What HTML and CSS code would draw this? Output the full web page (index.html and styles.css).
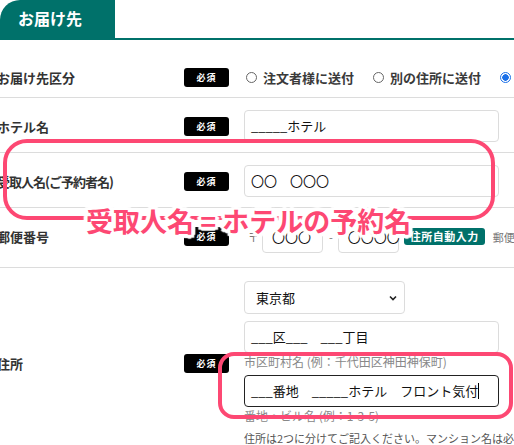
FILE: index.html
```html
<!DOCTYPE html>
<html lang="ja">
<head>
<meta charset="utf-8">
<link rel="stylesheet" href="styles.css">
</head>
<body>
<div class="page">
  <div class="tabbar">
    <div class="tab">お届け先</div>
  </div>
  <div class="rows">
    <div class="row r1">
      <div class="label">お届け先区分</div>
      <div class="badge">必須</div>
      <div class="content radios">
        <span class="opt"><span class="radio"></span>注文者様に送付</span>
        <span class="opt"><span class="radio"></span>別の住所に送付</span>
        <span class="opt"><span class="radio on"></span>お届け先を指定</span>
      </div>
    </div>
    <div class="row">
      <div class="label">ホテル名</div>
      <div class="badge">必須</div>
      <div class="content"><div class="field wide">_____ホテル</div></div>
    </div>
    <div class="row">
      <div class="label narrow">受取人名(ご予約者名)</div>
      <div class="badge">必須</div>
      <div class="content"><div class="field wide">〇〇　〇〇〇</div></div>
    </div>
    <div class="row r4">
      <div class="label">郵便番号</div>
      <div class="badge">必須</div>
      <div class="content postal">
        <span class="mark">〒</span>
        <div class="field zip">〇〇〇</div>
        <span class="dash">-</span>
        <div class="field zip">〇〇〇〇</div>
        <span class="btn">住所自動入力</span>
        <span class="hint">郵便番号から住所を自動入力</span>
      </div>
    </div>
    <div class="row r5">
      <div class="label">住所</div>
      <div class="badge">必須</div>
      <div class="content addr">
        <div class="field select">東京都
          <svg class="chev" width="8" height="6" viewBox="0 0 8 6"><path d="M1 1.5 L4 4.5 L7 1.5" fill="none" stroke="#222" stroke-width="1.6"/></svg>
        </div>
        <div class="field wide">___区___　___丁目</div>
        <div class="help">市区町村名 (例：千代田区神田神保町)</div>
        <div class="field wide focus">___番地　_____ホテル　フロント気付<span class="caret"></span></div>
        <div class="help">番地・ビル名 (例：1-3-5)</div>
        <div class="note">住所は2つに分けてご記入ください。マンション名は必ずご記入ください。</div>
      </div>
    </div>
  </div>
  <div class="hl hl1"></div>
  <div class="callout">受取人名 = ホテルの予約名</div>
  <div class="hl hl2"></div>
</div>
</body>
</html>
```
FILE: styles.css
```css
html, body {
  margin: 0;
  padding: 0;
  background: #fff;
}
body {
  width: 514px;
  height: 445px;
  overflow: hidden;
  font-family: "Noto Sans CJK JP", "Noto Sans", sans-serif;
  color: #333;
}
.page {
  position: relative;
  width: 514px;
  height: 445px;
  overflow: hidden;
}
.tabbar {
  border-bottom: 2px solid #00716a;
  height: 38px;
  display: flex;
}
.tab {
  width: 115px;
  height: 38px;
  background: #00716a;
  border-radius: 20px 0 0 0;
  color: #fff;
  font-weight: bold;
  font-size: 16px;
  line-height: 37px;
  padding-left: 18px;
  box-sizing: border-box;
}
.rows {
  margin-top: 18px;
  margin-left: -3px;
}
.row {
  display: flex;
  align-items: center;
  border-bottom: 1px solid #dcdcdc;
  padding: 12px 0 10px;
  white-space: nowrap;
}
.row.r1 {
  padding: 10px 0 10px;
}
.row.r4 {
  padding: 12px 0 14px;
}
.row.r5 {
  padding: 13px 0 10px;
  border-bottom: none;
}
.label {
  width: 187px;
  flex: none;
  font-size: 13px;
  font-weight: bold;
  color: #333;
}
.label.narrow {
  letter-spacing: -1px;
}
.badge {
  width: 45px;
  height: 19px;
  flex: none;
  background: #000;
  color: #fff;
  border-radius: 3px;
  font-size: 9px;
  font-weight: bold;
  line-height: 19px;
  text-align: center;
  letter-spacing: 1px;
}
.content {
  margin-left: 15px;
  flex: none;
}
.radios {
  display: flex;
  align-items: center;
  margin-left: 17px;
  font-size: 13px;
  font-weight: bold;
  color: #3a3a3a;
}
.opt {
  display: inline-flex;
  align-items: center;
  margin-right: 19px;
}
.radio {
  width: 9px;
  height: 9px;
  border: 1px solid #666;
  border-radius: 50%;
  margin-right: 6px;
  box-sizing: content-box;
  display: inline-block;
}
.radio.on {
  border-color: #1a6fe8;
  background: radial-gradient(circle, #1a6fe8 0 3px, #fff 3.5px);
}
.field {
  box-sizing: border-box;
  height: 32px;
  border: 1px solid #dcdcdc;
  border-radius: 4px;
  font-size: 13px;
  color: #111;
  line-height: 30px;
  padding-left: 6px;
  background: #fff;
}
.wide {
  width: 255px;
}
.postal {
  display: flex;
  align-items: center;
  margin-left: 19px;
}
.mark {
  font-size: 11px;
  color: #777;
  margin-right: 3px;
}
.field.zip {
  width: 61px;
  height: 33px;
  line-height: 31px;
  padding-left: 9px;
}
.dash {
  font-size: 11px;
  color: #777;
  margin: 0 5px 0 6px;
}
.btn {
  margin-left: 5px;
  background: #00716a;
  color: #fff;
  font-size: 11px;
  font-weight: bold;
  border-radius: 3px;
  height: 17px;
  line-height: 17px;
  padding: 0 6px;
  letter-spacing: 0.5px;
}
.hint {
  margin-left: 8px;
  font-size: 11px;
  color: #777;
}
.addr {
  display: flex;
  flex-direction: column;
}
.field.select {
  width: 161px;
  height: 33px;
  padding-left: 11px;
  display: flex;
  align-items: center;
  justify-content: space-between;
  padding-right: 7px;
}
.select + .field {
  margin-top: 7px;
}
.help {
  font-size: 12px;
  color: #888;
  height: 20px;
  line-height: 18px;
  margin-bottom: 2px;
}
.field.focus {
  border: 1.5px solid #222;
  line-height: 29px;
}
.caret {
  display: inline-block;
  width: 1px;
  height: 16px;
  background: #000;
  vertical-align: -3px;
}
.note {
  margin-top: 2px;
  font-size: 11px;
  line-height: 14px;
  color: #555;
}
.hl {
  position: absolute;
  border: 4px solid #fd4873;
  box-sizing: border-box;
}
.hl1 {
  left: 3px;
  top: 139px;
  width: 492px;
  height: 81px;
  border-radius: 24px;
}
.hl2 {
  left: 218px;
  top: 352px;
  width: 295px;
  height: 67px;
  border-radius: 16px;
}
.callout {
  position: absolute;
  left: 86px;
  top: 203px;
  font-size: 27px;
  font-weight: bold;
  color: #fd4873;
  line-height: 36px;
  white-space: nowrap;
  text-shadow:
    3px 0 0 #fff, -3px 0 0 #fff, 0 3px 0 #fff, 0 -3px 0 #fff,
    2px 2px 0 #fff, -2px 2px 0 #fff, 2px -2px 0 #fff, -2px -2px 0 #fff,
    4px 0 1px #fff, -4px 0 1px #fff, 0 4px 1px #fff, 0 -4px 1px #fff,
    3px 3px 1px #fff, -3px 3px 1px #fff, 3px -3px 1px #fff, -3px -3px 1px #fff;
}
```
